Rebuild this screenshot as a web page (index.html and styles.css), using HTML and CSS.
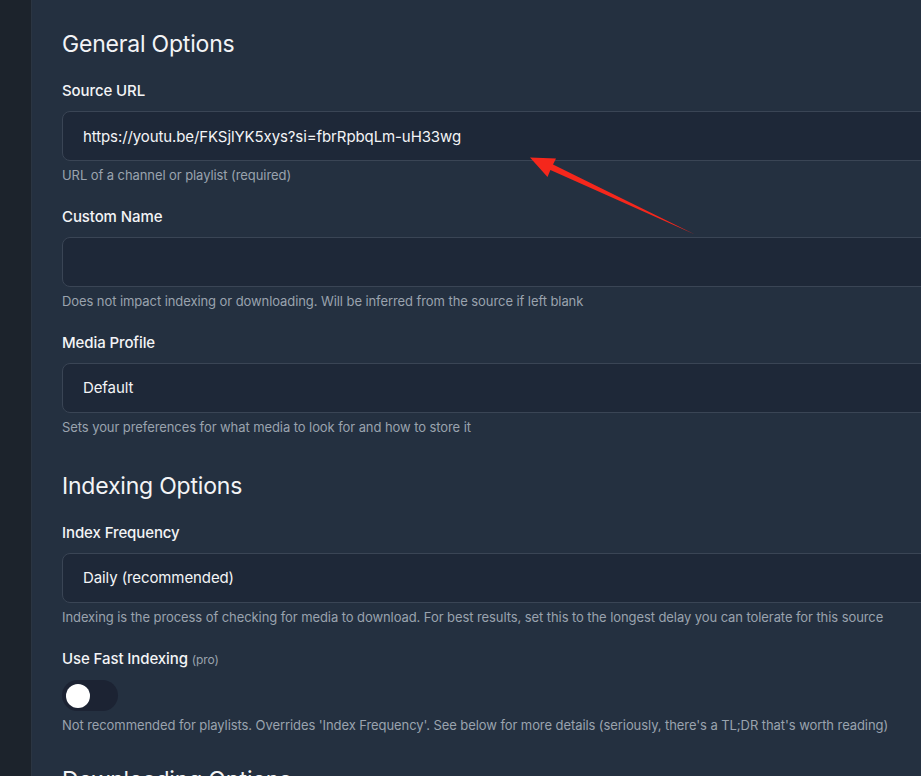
FILE: index.html
```html
<!DOCTYPE html>
<html lang="en">
<head>
  <meta charset="UTF-8">
  <meta name="viewport" content="width=device-width, initial-scale=1.0">
  <title>Source Options</title>
  <link rel="stylesheet" href="styles.css">
</head>
<body>
  <div class="layout">
    <aside class="sidebar"></aside>

    <main class="content">
      <h2>General Options</h2>

      <div class="field">
        <label for="source-url">Source URL</label>
        <input type="text" id="source-url" value="https://youtu.be/FKSjlYK5xys?si=fbrRpbqLm-uH33wg">
        <p class="help">URL of a channel or playlist (required)</p>
      </div>

      <div class="field">
        <label for="custom-name">Custom Name</label>
        <input type="text" id="custom-name">
        <p class="help">Does not impact indexing or downloading. Will be inferred from the source if left blank</p>
      </div>

      <div class="field">
        <label for="media-profile">Media Profile</label>
        <div class="select" id="media-profile">Default</div>
        <p class="help">Sets your preferences for what media to look for and how to store it</p>
      </div>

      <h2>Indexing Options</h2>

      <div class="field">
        <label for="index-frequency">Index Frequency</label>
        <div class="select" id="index-frequency">Daily (recommended)</div>
        <p class="help">Indexing is the process of checking for media to download. For best results, set this to the longest delay you can tolerate for this source</p>
      </div>

      <div class="field">
        <label>Use Fast Indexing <span class="muted">(pro)</span></label>
        <div class="toggle"><span class="knob"></span></div>
        <p class="help">Not recommended for playlists. Overrides 'Index Frequency'. See below for more details (seriously, there's a TL;DR that's worth reading)</p>
      </div>

      <h2 class="last">Downloading Options</h2>
    </main>
  </div>

  <!-- red annotation arrow pasted over the screenshot -->
  <svg class="arrow" width="921" height="776" viewBox="0 0 921 776">
    <polygon fill="#f5271c" points="530,157.5 556,158.5 553,164.5 695,234.5 550.4,170 547.5,177"/>
  </svg>
</body>
</html>
```

FILE: styles.css
```css
* { box-sizing: border-box; }
body { margin: 0; background: #243040; font-family: Inter, "Noto Sans", sans-serif; color: #f3f4f6; overflow: hidden; height: 776px; }
.layout { display: flex; height: 100%; overflow: hidden; }
.sidebar { width: 32px; flex-shrink: 0; background: #1c232c; border-right: 1px solid #2b3542; }
.content { flex: 1; padding: 17px 0 0 30px; min-width: 0; }
h2 { font-size: 23px; font-weight: 400; line-height: 28px; margin: 35px 0 23px; letter-spacing: -0.2px; white-space: nowrap; }
.content h2:first-child { margin-top: 13px; }
.content h2.last { margin-top: 31px; }
.field { margin-bottom: 22px; }
label { display: block; font-size: 15px; font-weight: 500; line-height: 20px; margin-bottom: 10px; letter-spacing: -0.1px; }
.muted { font-size: 12px; font-weight: 400; color: #9aa3ae; }
input, .select { display: block; width: 1000px; height: 50px; padding: 0 20px; background: #1e2838; border: 1px solid #3a4555; border-radius: 8px; color: #f3f4f6; font-family: inherit; font-size: 15px; line-height: 48px; letter-spacing: -0.1px; outline: none; }
.help { margin: 4px 0 0; font-size: 13px; line-height: 20px; color: #9aa3ae; letter-spacing: -0.08px; white-space: nowrap; }
.toggle { width: 56px; height: 31px; border-radius: 16px; background: #1c2333; padding: 4px; display: flex; align-items: center; }
.knob { display: block; width: 24px; height: 24px; border-radius: 50%; background: #fff; }
.arrow { position: absolute; left: 0; top: 0; pointer-events: none; }
```
